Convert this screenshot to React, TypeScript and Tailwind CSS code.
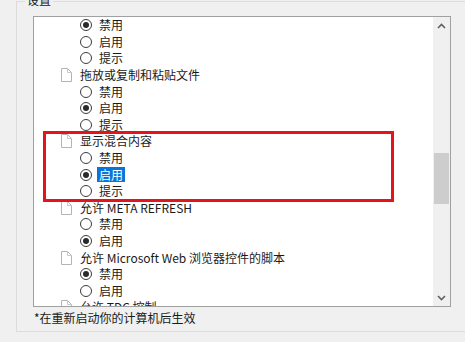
import React from "react";

type Item =
  | { kind: "head"; label: string }
  | { kind: "radio"; label: string; checked?: boolean; selected?: boolean };

const items: Item[] = [
  { kind: "radio", label: "禁用", checked: true },
  { kind: "radio", label: "启用" },
  { kind: "radio", label: "提示" },
  { kind: "head", label: "拖放或复制和粘贴文件" },
  { kind: "radio", label: "禁用" },
  { kind: "radio", label: "启用", checked: true },
  { kind: "radio", label: "提示" },
  { kind: "head", label: "显示混合内容" },
  { kind: "radio", label: "禁用" },
  { kind: "radio", label: "启用", checked: true, selected: true },
  { kind: "radio", label: "提示" },
  { kind: "head", label: "允许 META REFRESH" },
  { kind: "radio", label: "禁用" },
  { kind: "radio", label: "启用", checked: true },
  { kind: "head", label: "允许 Microsoft Web 浏览器控件的脚本" },
  { kind: "radio", label: "禁用", checked: true },
  { kind: "radio", label: "启用" },
  { kind: "head", label: "允许 TDC 控制" },
  { kind: "radio", label: "禁用" },
];

function DocIcon() {
  return (
    <svg width="12" height="14" viewBox="0 0 12 14" className="shrink-0">
      <path d="M1.5 0.5 H7.5 L11.5 4.5 V13.5 H1.5 Z" fill="#ffffff" stroke="#b4b4b4" strokeWidth="1" />
      <path d="M7.5 0.5 V4.5 H11.5" fill="none" stroke="#c8c8c8" strokeWidth="1" />
    </svg>
  );
}

function Radio({ checked }: { checked?: boolean }) {
  return (
    <span className="shrink-0 w-[12px] h-[12px] rounded-full border border-[#3c3c3c] bg-white flex items-center justify-center">
      {checked ? <span className="w-[6px] h-[6px] rounded-full bg-[#2a2a2a]" /> : null}
    </span>
  );
}

function Chevron({ up }: { up?: boolean }) {
  return (
    <svg width="9" height="6" viewBox="0 0 9 6">
      <path
        d={up ? "M1 5 L4.5 1.5 L8 5" : "M1 1 L4.5 4.5 L8 1"}
        fill="none"
        stroke="#606060"
        strokeWidth="1.6"
      />
    </svg>
  );
}

export default function App() {
  return (
    <div
      className="relative w-[465px] h-[342px] overflow-hidden bg-[#f0f0f0] text-[12px] text-[#1a1a1a]"
      style={{ fontFamily: '"Noto Sans CJK SC", "Noto Sans", sans-serif' }}
    >
      <div className="pl-[16px] pt-px">
        <div className="relative w-[470px] h-[331px] border-t border-l border-b border-[#dcdcdc] pl-[16px] pt-[14px]">
          <span className="absolute left-[8px] top-[-10px] px-[2px] bg-[#f0f0f0] leading-[16px]">设置</span>
          <div className="w-[418px] h-[291px] border border-[#a0a0a0] bg-white flex">
            <div className="flex-1 overflow-hidden">
              {items.map((it, i) =>
                it.kind === "head" ? (
                  <div key={i} className="h-[16.6px] flex items-center pl-[26px] gap-[8px] leading-none whitespace-nowrap">
                    <DocIcon />
                    <span>{it.label}</span>
                  </div>
                ) : (
                  <div key={i} className="h-[16.6px] flex items-center pl-[46px] gap-[5px] leading-none whitespace-nowrap">
                    <Radio checked={it.checked} />
                    <span
                      className={
                        it.selected
                          ? "px-[2px] h-[15px] flex items-center bg-[#0a74d8] text-white"
                          : "px-[2px]"
                      }
                    >
                      {it.label}
                    </span>
                  </div>
                )
              )}
            </div>
            <div className="w-[17px] bg-[#f0f0f0] flex flex-col">
              <div className="h-[17px] flex items-center justify-center">
                <Chevron up />
              </div>
              <div className="flex-1 px-[1px]">
                <div className="mt-[119px] h-[51px] bg-[#cdcdcd]" />
              </div>
              <div className="h-[17px] flex items-center justify-center">
                <Chevron />
              </div>
            </div>
          </div>
          <div className="mt-[3px] pl-[1px] leading-[16px]">*在重新启动你的计算机后生效</div>
        </div>
      </div>
      <div className="absolute left-[43px] top-[131px] w-[351px] h-[71px] border-[3px] border-[#e5141c]" />
    </div>
  );
}
